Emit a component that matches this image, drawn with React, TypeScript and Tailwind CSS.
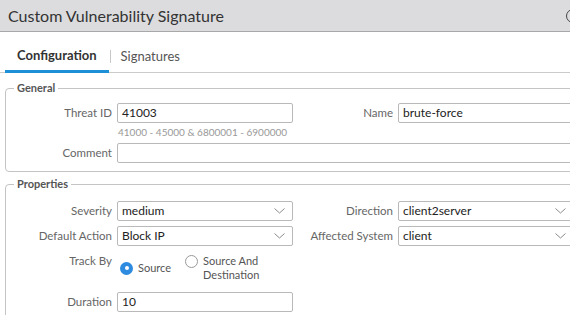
import React from "react";

const font = { fontFamily: "Lato, 'Open Sans', sans-serif" };

function Chevron() {
    return (
        <svg width="11" height="6" viewBox="0 0 11 6" fill="none" className="shrink-0">
            <polyline points="0.5,0.5 5.5,5 10.5,0.5" stroke="#8a8a8a" strokeWidth="1" />
        </svg>
    )
}

function TextBox({ value, width = "w-[176px]" }: { value: string, width?: string }) {
    return <div className={`${width} h-[20px] border border-[#b9b9b9] rounded-[2px] bg-white px-[4px] flex items-center text-[12px] text-[#222]`}>{value}</div>
}

function SelectBox({ value }: { value: string }) {
    return (
        <div className="w-[176px] h-[20px] border border-[#b9b9b9] rounded-[2px] bg-white pl-[4px] pr-[7px] flex items-center justify-between text-[12px] text-[#222]">
            <span>{value}</span>
            <Chevron />
        </div>
    )
}

function Label({ text, width = "w-[111px]" }: { text: string, width?: string }) {
    return <div className={`${width} shrink-0 text-right text-[11.5px] text-[#666] leading-[20px] pr-[5px]`}>{text}</div>
}

export default function App() {
    return (
        <div className="w-[570px] h-[315px] overflow-hidden bg-white" style={font}>
            <div className="w-[590px]">
                {/* title bar */}
                <div className="h-[32px] bg-[#dcdcde] border-b border-[#a8a8a8] flex items-center justify-between pl-[8px] pr-[10px]">
                    <span className="text-[16px] text-[#333]">Custom Vulnerability Signature</span>
                    <div className="w-[14px] h-[14px] rounded-full border border-[#444]"></div>
                </div>

                {/* tabs */}
                <div className="h-[41px] flex border-b border-[#cbcbcb] pl-[5px]">
                    <div className="h-[41px] -mb-px flex items-center pt-[9px] px-[12px] border-b-[3px] border-[#1e90d8] text-[13px] font-bold text-[#333]">Configuration</div>
                    <div className="flex items-center pt-[9px] pl-[1px]">
                        <div className="w-px h-[13px] bg-[#c8c8c8]"></div>
                        <span className="ml-[10px] text-[13px] text-[#555]">Signatures</span>
                    </div>
                </div>

                <div className="px-[5px]">
                    {/* general */}
                    <fieldset className="mt-[8px] border border-[#c4c4c4] rounded-[4px] pb-[8px]">
                        <legend className="ml-[8px] px-[3px] text-[11px] font-bold text-[#555] leading-[14px]">General</legend>
                        <div className="pt-[8px]">
                            <div className="flex items-start">
                                <Label text="Threat ID" />
                                <div className="flex flex-col">
                                    <TextBox value="41003" />
                                    <div className="text-[10px] text-[#999] leading-[14px] mt-[2px] pl-[1px]">41000 - 45000 &amp; 6800001 - 6900000</div>
                                </div>
                                <Label text="Name" width="w-[105px]" />
                                <TextBox value="brute-force" />
                            </div>
                            <div className="flex items-start mt-[4px] pr-[5px]">
                                <Label text="Comment" />
                                <TextBox value="" width="flex-1" />
                            </div>
                        </div>
                    </fieldset>

                    {/* properties */}
                    <fieldset className="mt-[5px] border border-[#c4c4c4] rounded-[4px] pb-[8px]">
                        <legend className="ml-[8px] px-[3px] text-[11px] font-bold text-[#555] leading-[14px]">Properties</legend>
                        <div className="pt-[10px] flex flex-col gap-[5px]">
                            <div className="flex items-start">
                                <Label text="Severity" />
                                <SelectBox value="medium" />
                                <Label text="Direction" width="w-[105px]" />
                                <SelectBox value="client2server" />
                            </div>
                            <div className="flex items-start">
                                <Label text="Default Action" />
                                <SelectBox value="Block IP" />
                                <Label text="Affected System" width="w-[105px]" />
                                <SelectBox value="client" />
                            </div>
                            <div className="flex items-start mt-[3px]">
                                <div className="w-[111px] shrink-0 text-right text-[11.5px] text-[#666] leading-[14px] pr-[5px]">Track By</div>
                                <div className="flex items-center pl-[3px] text-[11px] text-[#555] leading-[14px]">
                                    <div className="flex items-center">
                                        <div className="w-[13px] h-[13px] rounded-full bg-[#2d8be0] flex items-center justify-center">
                                            <div className="w-[4px] h-[4px] rounded-full bg-white"></div>
                                        </div>
                                        <span className="ml-[5px]">Source</span>
                                    </div>
                                    <div className="flex items-start ml-[14px]">
                                        <div className="w-[13px] h-[13px] rounded-full border border-[#9a9a9a] bg-white mt-[1px]"></div>
                                        <span className="ml-[5px] w-[64px]">Source And Destination</span>
                                    </div>
                                </div>
                            </div>
                            <div className="flex items-start mt-[5px]">
                                <Label text="Duration" />
                                <div className="flex flex-col">
                                    <TextBox value="10" />
                                    <div className="text-[10px] text-[#999] leading-[14px] mt-[2px] pl-[1px]">1 - 3600 (seconds)</div>
                                </div>
                            </div>
                        </div>
                    </fieldset>
                </div>
            </div>
        </div>
    )
}
